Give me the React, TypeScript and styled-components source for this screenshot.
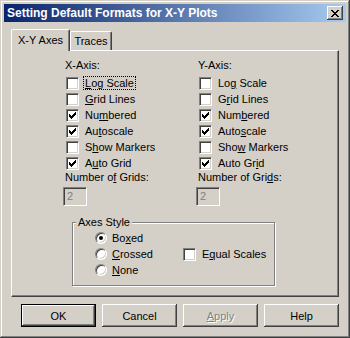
import React from 'react'
import styled, { createGlobalStyle } from 'styled-components'

const GlobalStyle = createGlobalStyle`
    html, body {
        margin: 0;
        padding: 0;
        background: #d4d0c8;
    }
    body {
        font-family: "Liberation Sans", Arial, sans-serif;
        font-size: 11px;
        color: #000;
    }
`

const Check = () => (
    <svg width="7" height="7" viewBox="0 0 7 7" shapeRendering="crispEdges">
        <path d="M0 2h1v3h-1zM1 3h1v3h-1zM2 4h1v3h-1zM3 3h1v3h-1zM4 2h1v3h-1zM5 1h1v3h-1zM6 0h1v3h-1z" fill="#000" />
    </svg>
)

const CloseGlyph = () => (
    <svg width="8" height="7" viewBox="0 0 8 7" shapeRendering="crispEdges">
        <path d="M0 0h2v1h-2zM6 0h2v1h-2zM1 1h2v1h-2zM5 1h2v1h-2zM2 2h4v1h-4zM3 3h2v1h-2zM2 4h4v1h-4zM1 5h2v1h-2zM5 5h2v1h-2zM0 6h2v1h-2zM6 6h2v1h-2z" fill="#000" />
    </svg>
)

interface CheckProps {
    label: React.ReactNode,
    checked?: boolean,
    focused?: boolean
}

const CheckRow = ({ label, checked, focused }: CheckProps) => (
    <Row>
        <Box>{checked && <Check />}</Box>
        <RowLabel $focused={focused}>{label}</RowLabel>
    </Row>
)

interface RadioProps {
    label: React.ReactNode,
    selected?: boolean
}

const RadioRow = ({ label, selected }: RadioProps) => (
    <Row>
        <Radio>{selected && <Dot />}</Radio>
        <RadioLabel>{label}</RadioLabel>
    </Row>
)

// label with one mnemonic letter underlined
const M = ({ pre, key_, post }: { pre: string, key_: string, post: string }) => (
    <>{pre}<u>{key_}</u>{post}</>
)

interface AxisProps {
    title: string,
    keys: [string, string, string][]
    grids: [string, string, string]
    focusFirst?: boolean
}

const checkedRows = [false, false, true, true, false, true]

const AxisColumn = ({ title, keys, grids, focusFirst }: AxisProps) => (
    <Column>
        <ColTitle>{title}</ColTitle>
        {keys.map((k, i) => (
            <CheckRow
                key={i}
                label={<M pre={k[0]} key_={k[1]} post={k[2]} />}
                checked={checkedRows[i]}
                focused={focusFirst && i === 0}
            />
        ))}
        <ColTitle><M pre={grids[0]} key_={grids[1]} post={grids[2]} /></ColTitle>
        <NumInput>2</NumInput>
    </Column>
)

export default function App() {
    return (
        <>
            <GlobalStyle />
            <Window>
                <TitleBar>
                    <Title>Setting Default Formats for X-Y Plots</Title>
                    <CloseButton><CloseGlyph /></CloseButton>
                </TitleBar>
                <Body>
                    <TabStrip>
                        <Tab $active>X-Y Axes</Tab>
                        <Tab>Traces</Tab>
                    </TabStrip>
                    <Panel>
                        <Columns>
                            <AxisColumn
                                title="X-Axis:"
                                focusFirst
                                keys={[
                                    ['', 'L', 'og Scale'],
                                    ['', 'G', 'rid Lines'],
                                    ['Nu', 'm', 'bered'],
                                    ['Au', 't', 'oscale'],
                                    ['S', 'h', 'ow Markers'],
                                    ['A', 'u', 'to Grid'],
                                ]}
                                grids={['Number o', 'f', ' Grids:']}
                            />
                            <AxisColumn
                                title="Y-Axis:"
                                keys={[
                                    ['Lo', 'g', ' Scale'],
                                    ['G', 'r', 'id Lines'],
                                    ['Num', 'b', 'ered'],
                                    ['Auto', 's', 'cale'],
                                    ['Sho', 'w', ' Markers'],
                                    ['Auto Gr', 'i', 'd'],
                                ]}
                                grids={['Number of Gri', 'd', 's:']}
                            />
                        </Columns>
                        <Group>
                            <GroupLabel>Axes Style</GroupLabel>
                            <GroupGrid>
                                <RadioRow selected label={<M pre="Bo" key_="x" post="ed" />} />
                                <span />
                                <RadioRow label={<M pre="" key_="C" post="rossed" />} />
                                <CheckRow label={<M pre="E" key_="q" post="ual Scales" />} />
                                <RadioRow label={<M pre="" key_="N" post="one" />} />
                            </GroupGrid>
                        </Group>
                    </Panel>
                    <ButtonRow>
                        <Button $default>OK</Button>
                        <Button>Cancel</Button>
                        <Button $disabled><u>A</u>pply</Button>
                        <Button>Help</Button>
                    </ButtonRow>
                </Body>
            </Window>
        </>
    )
}

const Window = styled.div`
    box-sizing: border-box;
    width: 350px;
    height: 338px;
    padding: 4px;
    background: #d4d0c8;
    box-shadow:
        inset -1px -1px #404040,
        inset 1px 1px #d4d0c8,
        inset -2px -2px #808080,
        inset 2px 2px #fff;
    display: flex;
    flex-direction: column;
`

const TitleBar = styled.div`
    height: 18px;
    display: flex;
    align-items: center;
    padding: 0 3px 0 3px;
    background: linear-gradient(to right, #0a246a, #a6caf0);
`

const Title = styled.div`
    flex: 1;
    color: #fff;
    font-weight: bold;
    font-size: 12px;
    white-space: nowrap;
`

const CloseButton = styled.div`
    width: 16px;
    height: 14px;
    box-sizing: border-box;
    background: #d4d0c8;
    display: flex;
    align-items: center;
    justify-content: center;
    box-shadow:
        inset -1px -1px #404040,
        inset 1px 1px #fff,
        inset -2px -2px #808080;
`

const Body = styled.div`
    padding: 7px 0 0 7px;
    display: flex;
    flex-direction: column;
`

const TabStrip = styled.div`
    display: flex;
    align-items: flex-end;
    height: 21px;
    position: relative;
    z-index: 1;
`

const Tab = styled.div<{ $active?: boolean }>`
    box-sizing: border-box;
    height: ${p => p.$active ? 22 : 19}px;
    margin-bottom: ${p => p.$active ? -1 : 0}px;
    padding-bottom: ${p => p.$active ? 2 : 0}px;
    width: ${p => p.$active ? 59 : 42}px;
    display: flex;
    align-items: center;
    justify-content: center;
    white-space: nowrap;
    font-size: 11px;
    background: #d4d0c8;
    border-top: 1px solid #fff;
    border-left: 1px solid #fff;
    border-right: 1px solid #404040;
    border-radius: 2px 2px 0 0;
    box-shadow: inset -1px 0 #808080;
`

const Panel = styled.div`
    box-sizing: border-box;
    width: 328px;
    height: 247px;
    padding: 8px 0 0 53px;
    border-top: 1px solid #fff;
    border-left: 1px solid #fff;
    border-right: 1px solid #404040;
    border-bottom: 1px solid #404040;
    box-shadow: inset -1px -1px #808080;
`

const Columns = styled.div`
    display: grid;
    grid-template-columns: 133px 133px;
`

const Column = styled.div`
    display: flex;
    flex-direction: column;
`

const ColTitle = styled.div`
    height: 13px;
    line-height: 13px;
    margin-bottom: 3px;
    white-space: nowrap;
`

const Row = styled.div`
    height: 16px;
    display: flex;
    align-items: center;
    white-space: nowrap;
`

const Box = styled.div`
    box-sizing: border-box;
    width: 13px;
    height: 13px;
    margin-left: 1px;
    background: #fff;
    display: flex;
    align-items: center;
    justify-content: center;
    border-top: 1px solid #808080;
    border-left: 1px solid #808080;
    border-right: 1px solid #fff;
    border-bottom: 1px solid #fff;
    box-shadow: inset 1px 1px #404040, inset -1px -1px #d4d0c8;
`

const RowLabel = styled.span<{ $focused?: boolean }>`
    margin-left: 5px;
    padding: 0 1px;
    line-height: 12px;
    outline: ${p => p.$focused ? '1px dotted #000' : 'none'};
`

const NumInput = styled.div`
    box-sizing: border-box;
    width: 24px;
    height: 19px;
    margin-left: -2px;
    padding: 2px 0 0 3px;
    color: #808080;
    border-top: 1px solid #808080;
    border-left: 1px solid #808080;
    border-right: 1px solid #fff;
    border-bottom: 1px solid #fff;
    box-shadow: inset 1px 1px #404040, inset -1px -1px #d4d0c8;
`

const Group = styled.div`
    box-sizing: border-box;
    position: relative;
    width: 203px;
    height: 64px;
    margin: 16px 0 0 7px;
    padding: 7px 0 0 22px;
    border: 1px solid #808080;
    box-shadow: inset 1px 1px #fff, 1px 1px #fff;
`

const GroupLabel = styled.span`
    position: absolute;
    top: -7px;
    left: 3px;
    padding: 0 2px;
    line-height: 13px;
    background: #d4d0c8;
`

const GroupGrid = styled.div`
    display: grid;
    grid-template-columns: 87px auto;
`

const Radio = styled.div`
    box-sizing: border-box;
    width: 12px;
    height: 12px;
    border-radius: 50%;
    background: #fff;
    display: flex;
    align-items: center;
    justify-content: center;
    border-top: 1px solid #808080;
    border-left: 1px solid #808080;
    border-right: 1px solid #fff;
    border-bottom: 1px solid #fff;
    box-shadow: inset 1px 1px #404040, inset -1px -1px #d4d0c8;
`

const Dot = styled.div`
    width: 4px;
    height: 4px;
    border-radius: 50%;
    background: #000;
`

const RadioLabel = styled.span`
    margin-left: 5px;
`

const ButtonRow = styled.div`
    display: flex;
    gap: 6px;
    padding: 7px 0 0 10px;
`

const Button = styled.div<{ $default?: boolean, $disabled?: boolean }>`
    box-sizing: border-box;
    width: 75px;
    height: 23px;
    display: flex;
    align-items: center;
    justify-content: center;
    font-size: 11px;
    background: #d4d0c8;
    color: ${p => p.$disabled ? '#808080' : '#000'};
    text-shadow: ${p => p.$disabled ? '1px 1px #fff' : 'none'};
    border: ${p => p.$default ? '1px solid #000' : 'none'};
    box-shadow: inset -1px -1px #404040, inset 1px 1px #fff, inset -2px -2px #808080;
`
